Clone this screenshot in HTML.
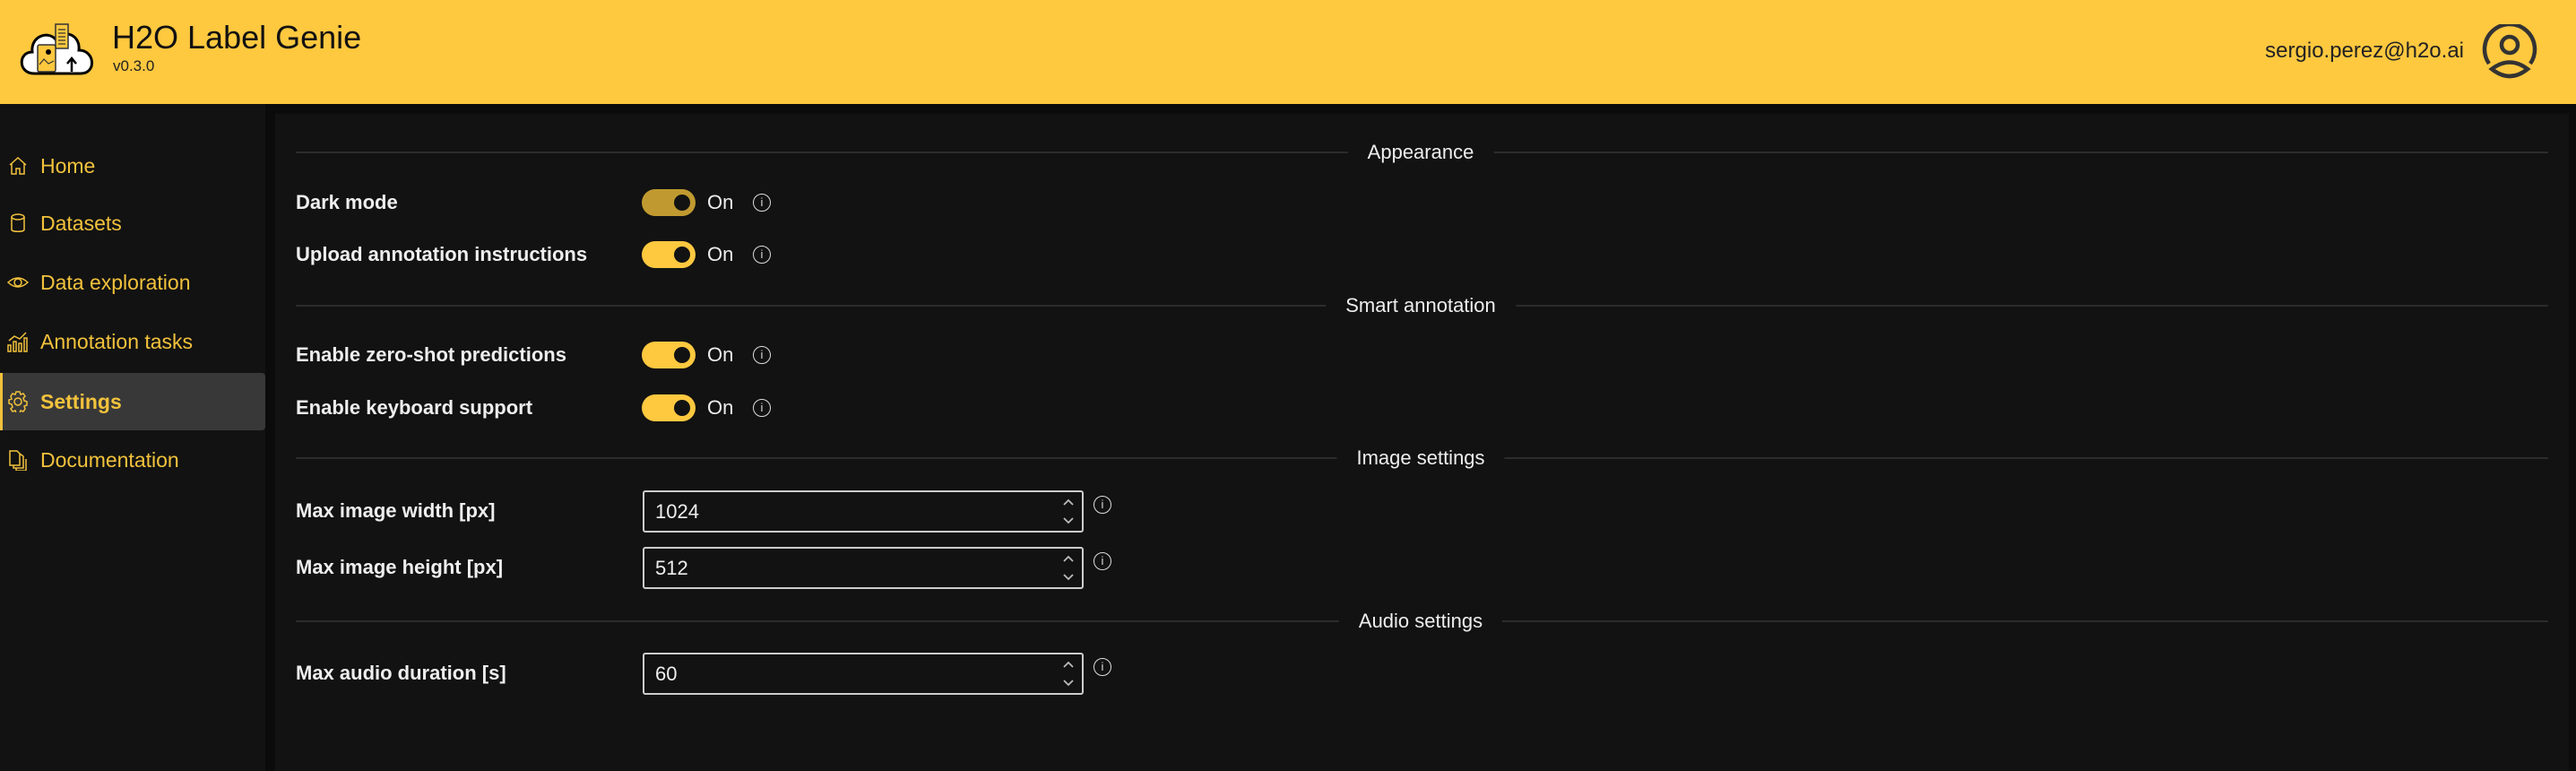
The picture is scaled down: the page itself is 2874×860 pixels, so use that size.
<!DOCTYPE html>
<html><head><meta charset="utf-8"><style>
*{box-sizing:border-box;margin:0;padding:0}
body{width:2874px;height:860px;background:#0b0b0b;font-family:"Liberation Sans",sans-serif;overflow:hidden;position:relative}
.hdr{position:absolute;left:0;top:0;width:2874px;height:116px;background:#fec83f}
.title{position:absolute;left:125px;top:21px;font-size:36px;color:#111}
.ver{position:absolute;left:126px;top:64px;font-size:17px;color:#222}
.email{position:absolute;right:125px;top:43px;font-size:24px;color:#222}
.side{position:absolute;left:0;top:116px;width:296px;height:744px;background:#121212}
.nav{position:absolute;left:0;width:296px;height:64px;color:#f2c23c;font-size:23px;line-height:64px;padding-left:45px}
.nav svg{position:absolute;left:8px;top:20px}
.sel{background:#383838;border-left:3px solid #f2c23c;border-radius:0 4px 4px 0;font-weight:bold;padding-left:42px}
.sel svg{left:5px}
.main{position:absolute;left:307px;top:127px;width:2559px;height:733px;background:#121212}
.div{position:absolute;left:330px;width:2513px;height:2px;background:#2c2c2c}
.dl{position:absolute;color:#eee;font-size:22px;background:#121212;padding:0 22px;transform:translate(-50%,-50%)}
.lab{position:absolute;left:330px;color:#eee;font-size:22px;font-weight:bold;transform:translateY(-50%)}
.tg{position:absolute;left:716px;width:60px;height:30px;border-radius:15px;background:#fec83f}
.tg::after{content:"";position:absolute;left:36px;top:6px;width:18px;height:18px;border-radius:50%;background:#121212}
.on{position:absolute;left:789px;color:#eee;font-size:22px;transform:translateY(-50%)}
.inf{position:absolute;width:20px;height:20px;border:1.5px solid #ddd;border-radius:50%;color:#ddd;font-size:13px;text-align:center;line-height:17px;transform:translate(-50%,-50%)}
.inp{position:absolute;left:717px;width:492px;height:47px;border:2px solid #ccc;border-radius:3px;color:#eee;font-size:22px;line-height:43px;padding-left:12px}
.inp svg{position:absolute;right:8px;top:5px}
</style></head><body>
<div class="hdr">
<svg style="position:absolute;left:18px;top:24px" width="90" height="62" viewBox="0 0 90 62">
<path d="M20 58 C2 58 2 34 18 34 C16 16 36 10 44 20 C52 8 72 14 70 32 C88 32 90 58 72 58 Z" fill="#fff" stroke="#000" stroke-width="3"/>
<path d="M44 3 H58 V30 H44 Z" fill="#fec83f" stroke="#333" stroke-width="1.5"/>
<path d="M47 9 H55 M47 13 H55 M47 17 H55 M47 21 H55 M47 25 H55" stroke="#333" stroke-width="1.2"/>
<rect x="24" y="26" width="20" height="30" rx="2" fill="#fec83f" stroke="#333" stroke-width="1.5"/>
<circle cx="36" cy="34" r="3" fill="#000"/>
<path d="M26 48 L31 42 L36 47 L42 44" stroke="#333" stroke-width="1.2" fill="none"/>
<path d="M62 56 V42 M57 47 L62 41 L67 47" stroke="#000" stroke-width="2.5" fill="none"/>
</svg>
<div class="title">H2O Label Genie</div>
<div class="ver">v0.3.0</div>
<div class="email">sergio.perez@h2o.ai</div>
<svg style="position:absolute;left:2769px;top:27px" width="62" height="62" viewBox="0 0 62 62" fill="none" stroke="#333" stroke-width="4.5">
<path d="M8 44 A28 28 0 1 1 54 44"/><circle cx="31" cy="23" r="9"/><path d="M11 50 Q31 35 51 50 Q31 66 11 50Z"/>
</svg>
</div>
<div class="side">
<div class="nav" style="top:37px"><svg width="24" height="24" viewBox="0 0 24 24" fill="none" stroke="#f2c23c" stroke-width="1.5"><path d="M3 11 L12 3 L21 11 M5 9 V21 H10 V15 H14 V21 H19 V9"/></svg>Home</div>
<div class="nav" style="top:101px"><svg width="24" height="24" viewBox="0 0 24 24" fill="none" stroke="#f2c23c" stroke-width="1.5"><ellipse cx="12" cy="5" rx="7" ry="3"/><path d="M5 5 V19 C5 22 19 22 19 19 V5"/></svg>Datasets</div>
<div class="nav" style="top:167px"><svg width="24" height="24" viewBox="0 0 24 24" fill="none" stroke="#f2c23c" stroke-width="1.5"><path d="M1 12 Q12 2 23 12 Q12 22 1 12Z"/><circle cx="12" cy="12" r="4"/></svg>Data exploration</div>
<div class="nav" style="top:233px"><svg width="24" height="24" viewBox="0 0 24 24" fill="none" stroke="#f2c23c" stroke-width="1.5"><rect x="1" y="16" width="3" height="7"/><rect x="7" y="12" width="3" height="11"/><rect x="13" y="14" width="3" height="9"/><rect x="19" y="8" width="3" height="15"/><path d="M2 11 L8 6 L14 9 L21 2"/></svg>Annotation tasks</div>
<div class="nav sel" style="top:300px"><svg width="24" height="24" viewBox="0 0 24 24" fill="none" stroke="#f2c23c" stroke-width="1.5"><circle cx="12" cy="12" r="4"/><path d="M10 1h4l1 3 3-1 2 3-2 2 1 3 3 1v4l-3 1 1 3-2 3-3-1-1 3h-4l-1-3-3 1-2-3 2-2-1-3-3-1v-4l3-1-1-3 2-3 3 1z"/></svg>Settings</div>
<div class="nav" style="top:365px"><svg width="24" height="24" viewBox="0 0 24 24" fill="none" stroke="#f2c23c" stroke-width="1.5"><path d="M3 2 H11 L14 5 V18 H3Z M7 18 V21 H18 V8 L14 5 M10 21 V24 H21 V11"/></svg>Documentation</div>
</div>
<div class="main"></div>
<div class="div" style="top:169px"></div><div class="dl" style="left:1585px;top:170px">Appearance</div>
<div class="div" style="top:340px"></div><div class="dl" style="left:1585px;top:341px">Smart annotation</div>
<div class="div" style="top:510px"></div><div class="dl" style="left:1585px;top:511px">Image settings</div>
<div class="div" style="top:692px"></div><div class="dl" style="left:1585px;top:693px">Audio settings</div>

<div class="lab" style="top:226px">Dark mode</div>
<div class="tg" style="top:211px;background:#c09a30"></div><div class="on" style="top:226px">On</div><div class="inf" style="left:850px;top:226px">i</div>
<div class="lab" style="top:284px">Upload annotation instructions</div>
<div class="tg" style="top:269px"></div><div class="on" style="top:284px">On</div><div class="inf" style="left:850px;top:284px">i</div>
<div class="lab" style="top:396px">Enable zero-shot predictions</div>
<div class="tg" style="top:381px"></div><div class="on" style="top:396px">On</div><div class="inf" style="left:850px;top:396px">i</div>
<div class="lab" style="top:455px">Enable keyboard support</div>
<div class="tg" style="top:440px"></div><div class="on" style="top:455px">On</div><div class="inf" style="left:850px;top:455px">i</div>

<div class="lab" style="top:570px">Max image width [px]</div>
<div class="inp" style="top:547px">1024<svg width="14" height="34" viewBox="0 0 14 34" fill="none" stroke="#bbb" stroke-width="1.8"><path d="M2 9 L7 4 L12 9 M2 24 L7 29 L12 24"/></svg></div><div class="inf" style="left:1230px;top:563px">i</div>
<div class="lab" style="top:633px">Max image height [px]</div>
<div class="inp" style="top:610px">512<svg width="14" height="34" viewBox="0 0 14 34" fill="none" stroke="#bbb" stroke-width="1.8"><path d="M2 9 L7 4 L12 9 M2 24 L7 29 L12 24"/></svg></div><div class="inf" style="left:1230px;top:626px">i</div>
<div class="lab" style="top:751px">Max audio duration [s]</div>
<div class="inp" style="top:728px">60<svg width="14" height="34" viewBox="0 0 14 34" fill="none" stroke="#bbb" stroke-width="1.8"><path d="M2 9 L7 4 L12 9 M2 24 L7 29 L12 24"/></svg></div><div class="inf" style="left:1230px;top:744px">i</div>
</body></html>
